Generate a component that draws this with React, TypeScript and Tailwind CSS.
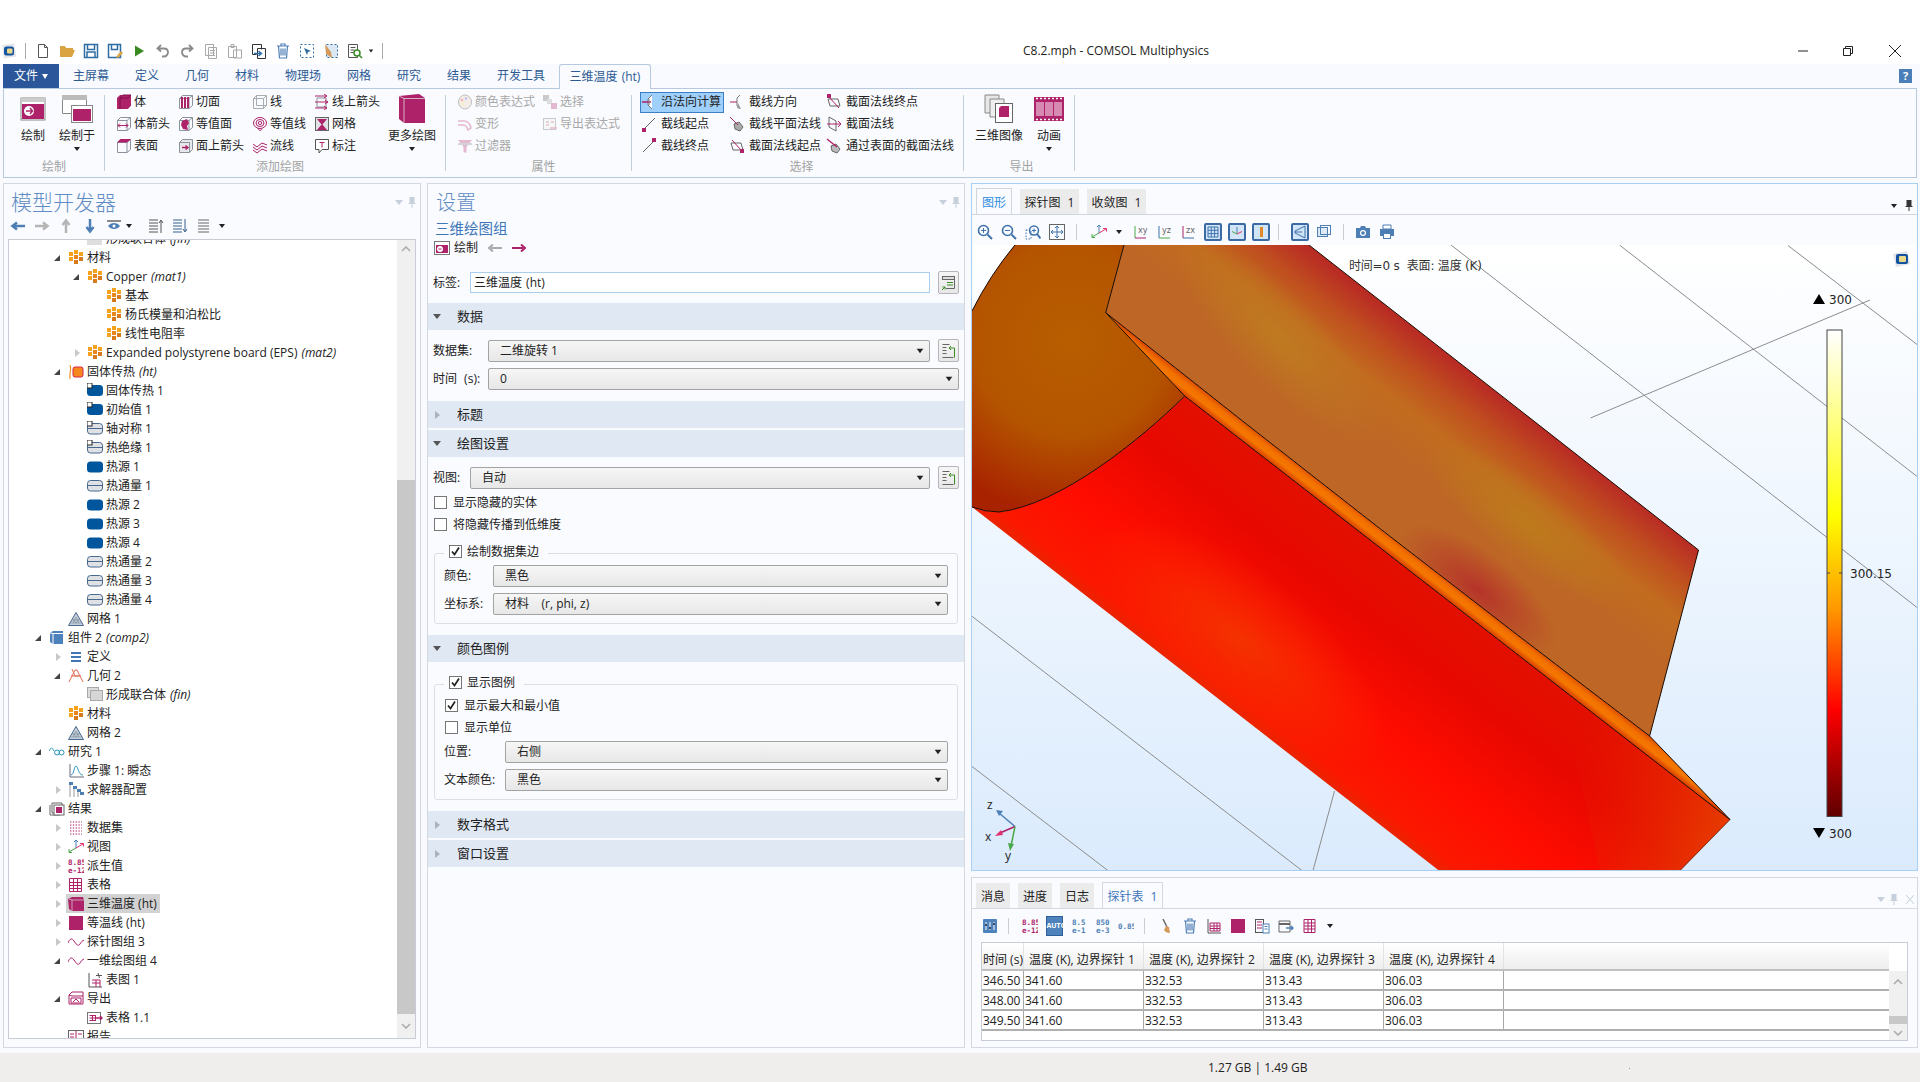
import React from 'react';

const M = '#ae2269';
const B = '#4d7fb5';
const W = '#8b929b';

type IconName = string;

const Svg = ({ w = 16, h = 16, children, className }: { w?: number; h?: number; children: React.ReactNode; className?: string }) => (
  <svg width={w} height={h} viewBox={`0 0 ${w} ${h}`} fill="none" className={`shrink-0 ${className ?? ''}`}>
    {children}
  </svg>
);

const wire = <path d="M1.5 4.5h9.5v10H1.5zM1.5 4.5l3-3h10v10l-3.5 3M11 4.5l3.5-3" stroke={W} />;

// Ribbon, tree and toolbar icons, all on a 16px box
const icons: Record<IconName, React.ReactNode> = {
  solid: (<><path d="M1 4l3-3h11v10.5L12 15H1z" fill={M} /><path d="M4 4v11M4 4l3-3h8L12 4z" stroke="#7d1049" /></>),
  arrowVol: (<>{wire}<path d="M2 9.5h10M2 9.5l2-2M2 9.5l2 2M12 9.5l-2-2M12 9.5l-2 2" stroke={M} /></>),
  surface: (<>{wire}<path d="M1 4.5l3.5-3.5H15L11 4.5z" fill={M} /></>),
  slice: (<>{wire}<path d="M4 3v11M7 3v11M10 3v11" stroke={M} strokeWidth="2" /></>),
  iso: (<>{wire}<path d="M4 5l5-2 2 4-2 3 1 4-5-1-2-4z" fill={M} /></>),
  faceArrow: (<><path d="M1.5 4.5h10v10h-10zM1.5 4.5l3-3h10v10l-3 3" fill="#e5e7ea" stroke={W} /><path d="M4 9.5h6M7.5 7.5l2.5 2-2.5 2" stroke={M} strokeWidth="1.5" /></>),
  line: (<path d="M1.5 4.5h10v10h-10zM1.5 4.5l3-3h10v10l-3 3M11.5 4.5l3-3M4.5 1.5v10h10" stroke="#a8adb4" />),
  isoLine: (<><ellipse cx="8" cy="7" rx="6.5" ry="5.5" stroke={M} /><ellipse cx="8" cy="7" rx="4" ry="3.5" stroke={M} /><ellipse cx="8" cy="7" rx="1.8" ry="1.5" stroke={M} /><path d="M6 12c1 3 3 3 4 1" stroke={M} /></>),
  stream: (<path d="M1 6l4 3 5-4 5 2M1 9l4 3 5-4 5 2M1 12l4 3 5-4 5 2" stroke={M} />),
  arrowLine: (<><path d="M3 4h9v9H3z" stroke={W} /><path d="M1 2h12M10 0l3 2-3 2M1 8h13M11 6l3 2-3 2M1 14h12M10 12l3 2-3 2" stroke={M} /></>),
  meshPlot: (<><rect x="1.5" y="1.5" width="13" height="13" fill="#dfe1e4" stroke="#666" /><path d="M3 3h10L8 9zM3 14l5-6 5 6z" fill={M} /></>),
  note: (<><path d="M1.5 1.5h13v10H8l-3 3.5v-3.5H1.5z" stroke="#555" fill="#fff" /><path d="M5.5 4.5h5M8 4.5v5" stroke={M} /></>),
  palette: (<><ellipse cx="8" cy="8" rx="6.5" ry="7" fill="#f1e3d8" stroke="#999" /><circle cx="5" cy="6" r="1.3" fill="#e88" /><circle cx="9" cy="4.5" r="1.3" fill="#8ae" /><circle cx="5.5" cy="10" r="1.3" fill="#ee8" /></>),
  select: (<><rect x="1" y="1" width="6" height="6" fill="#aaa" /><rect x="5" y="5" width="5" height="5" fill="#ccc" /><rect x="9" y="9" width="6" height="6" fill="#d98cb3" /></>),
  deform: (<path d="M1 5h6c4 0 6 3 7 7l-3 2c-1-3-2-5-5-5H1" stroke="#d98cb3" strokeWidth="1.5" />),
  exportExpr: (<><rect x="1.5" y="2.5" width="12" height="11" stroke="#aaa" fill="#f5f5f5" /><path d="M4 6h3M4 9h3M9 6h3" stroke="#c77" /><path d="M8 12h7" stroke="#d98cb3" strokeWidth="1.5" /></>),
  filter: (<><path d="M1 2h14L9.5 9v6l-3-1V9z" fill="#d98cb3" /><path d="M1 6h14" stroke="#bbb" strokeWidth="2" /></>),
  normal: (<><path d="M11 1L7 5v6l4 4" stroke="#777" fill="#fff" /><path d="M1 8h9" stroke={M} strokeWidth="1.5" /><path d="M8 5v6" stroke="#777" /></>),
  lineStart: (<><path d="M3 13L14 2" stroke="#666" /><rect x="1" y="12" width="4" height="4" fill={M} /></>),
  lineEnd: (<><path d="M2 14L13 3" stroke="#666" /><rect x="11" y="0" width="4" height="4" fill={M} /></>),
  lineDir: (<><path d="M11 1L8 4v8l3 3" stroke="#777" /><path d="M1 8h7" stroke={M} /><path d="M9 9l3 6-4-1z" fill="#999" /></>),
  planeN: (<><path d="M5 8l5-2 4 5-3 4-5-2z" fill="#aaa" stroke="#666" /><path d="M1 1l8 8" stroke={M} /></>),
  secStart: (<><path d="M2 5h10l2 7H4z" stroke="#666" /><path d="M3 2l9 10" stroke={M} /><rect x="11" y="11" width="4" height="4" fill={M} /></>),
  secEnd: (<><path d="M2 5h10l2 7H4z" stroke="#666" /><path d="M3 3l10 11" stroke={M} /><rect x="1" y="0" width="4" height="4" fill={M} /></>),
  secN: (<><path d="M3 1l7 4v10L3 11z" stroke="#666" /><path d="M1 8h14M12 5l3 3-3 3" stroke={M} /></>),
  surfSec: (<><path d="M5 8l5-2 4 5-3 4-5-2z" fill="#bbb" stroke="#666" /><path d="M1 1l10 8" stroke={M} strokeWidth="1.5" /></>),
  mat: (<><rect x="6" y="0" width="4" height="4" fill="#f5a21e" /><rect x="1" y="2" width="4" height="4" fill="#f5a21e" /><rect x="11" y="2" width="4" height="4" fill="#f5a21e" /><rect x="6" y="5" width="4" height="4" fill="#e8851e" /><rect x="1" y="7" width="4" height="4" fill="#f5a21e" /><rect x="11" y="7" width="4" height="4" fill="#d9791e" /><rect x="6" y="10" width="4" height="4" fill="#d9791e" /></>),
  domain: (<><rect x="0" y="2" width="16" height="11" rx="3.5" fill="#00569c" /><rect x="0" y="0" width="5" height="5" fill="#fff" stroke="#222" /></>),
  domainP: (<rect x="0" y="2.5" width="16" height="11" rx="3.5" fill="#00569c" />),
  bnd: (<><rect x="0.5" y="2.5" width="15" height="10.5" rx="3" fill="#dfe1e5" stroke="#47688f" /><path d="M1 7.5h14" stroke="#47688f" /><rect x="0" y="0" width="5" height="5" fill="#fff" stroke="#222" /></>),
  bndP: (<><rect x="0.5" y="2.5" width="15" height="10.5" rx="3" fill="#dfe1e5" stroke="#47688f" /><path d="M1 7.5h14" stroke="#47688f" /></>),
  physics: (<><path d="M2 1c2 4-1 8 0 14" stroke="#f0922c" strokeWidth="1.2" /><rect x="5" y="3" width="10" height="10" rx="2" fill="#f5871f" stroke="#d6244a" /></>),
  mesh: (<><path d="M8 1.5L15.5 14.5H0.5z" fill="#c8d0d8" stroke="#47688f" /><path d="M4 9h8M2.5 12h11M5 12l3-6 3 6M8 12L5.5 8.5M8 12l2.5-3.5" stroke="#6f8398" strokeWidth="0.6" /></>),
  comp: (<><path d="M1 3l3-2h10v13H4L1 12z" fill="#4d82bc" /><path d="M4 3.5V14M1 3l3 .5h10" stroke="#fff" /></>),
  defs: (<path d="M3 4h10M3 8h10M3 12h10" stroke="#3f78b5" strokeWidth="2" />),
  geom: (<path d="M1 14L7 2l2 0 6 12M4 1l3 7 4 0M3 8h10" stroke="#dd6b52" />),
  union: (<><rect x="0.5" y="0.5" width="11" height="10" fill="#dcdcdc" stroke="#a8a8a8" /><rect x="3.5" y="3.5" width="12" height="10" fill="#d6d6d6" stroke="#a8a8a8" /></>),
  study: (<><path d="M0 7c2-4 3-4 5 0" stroke="#2a93b8" /><circle cx="8" cy="8.5" r="2.5" stroke="#2a93b8" /><circle cx="12.5" cy="8.5" r="2.5" stroke="#2a93b8" /></>),
  step: (<><path d="M2 1v13h14" stroke="#667" /><path d="M3 12c3 0 3-9 5-9s2 9 7 9" stroke="#2a93b8" /></>),
  solver: (<><path d="M2 2v13M6 5v10M10 8v7" stroke="#999" /><rect x="1" y="0" width="4" height="3" fill={B} /><rect x="5" y="4" width="4" height="3" fill={B} /><rect x="9" y="7" width="4" height="3" fill={B} /><rect x="12" y="10" width="4" height="3" fill={B} /></>),
  results: (<><path d="M3 2h10v10H3zM1 4v10h10" stroke="#666" /><rect x="5" y="4" width="10" height="10" fill="#fff" stroke="#666" /><rect x="7" y="6" width="6" height="6" fill={M} /></>),
  data: (<path d="M2 2h12M2 5h12M2 8h12M2 11h12M2 14h12" stroke={M} strokeDasharray="1.4 1.4" />),
  views: (<><path d="M8 9V1M6 3l2-2 2 2" stroke={B} /><path d="M8 9L1 13M1 10v3.5h3" stroke="#4aa84a" /><path d="M8 9l7-4M12 4.5h3.5v3" stroke="#e0336e" /></>),
  derived: (<><text x="0" y="7" fontSize="7.5" fontWeight="700" fontFamily="DejaVu Sans Mono" fill={M}>8.85</text><text x="0" y="14.5" fontSize="7.5" fontWeight="700" fontFamily="DejaVu Sans Mono" fill={M}>e-12</text></>),
  table: (<path d="M1.5 1.5h12v13h-12zM1.5 5.5h12M1.5 8.5h12M1.5 11.5h12M5.5 1.5v13M9.5 1.5v13" stroke={M} />),
  plot3d: (<><path d="M0 3l4-2h11l1 3v11H4L1 13z" fill={M} /><path d="M4 4v11M1 3l3 1h12" stroke="#d7d7d7" strokeWidth="0.7" /></>),
  square: (<rect x="1" y="1" width="14" height="14" fill={M} />),
  wave: (<path d="M0 9c2-5 4-5 6-2s4 6 6 3 2-3 4-4" stroke={M} />),
  chart: (<><path d="M2 1v14h13" stroke="#555" /><path d="M5 8h8v7M5 11h8M9 8v7" stroke={M} /><path d="M11 1l1.5 5M9 3.5h6" stroke="#555" /></>),
  exportN: (<><path d="M1 4l3-3h11v4H4zM1 4v9h14V5" stroke={M} /><path d="M3 7h10v5H3z" stroke={M} /><path d="M5 11l3-3 3 3" stroke={M} /></>),
  tableExp: (<><rect x="0.5" y="2.5" width="13" height="11" fill="#fff" stroke="#777" /><path d="M2.5 5.5h6M2.5 8h6M2.5 10.5h6M5.5 5v6M8.5 5v6" stroke={M} /><path d="M9 8h6M13 6l2 2-2 2" stroke={M} strokeWidth="1.5" /></>),
  drawSmall: (<><rect x="0.5" y="1.5" width="15" height="13" fill="#fff" stroke="#777" /><rect x="2" y="5" width="12" height="8" fill={M} /><circle cx="6" cy="9" r="3" fill="#fff" /><path d="M4.5 9h3" stroke={M} /></>),
  report: (<><rect x="0.5" y="1.5" width="15" height="13" stroke="#666" /><path d="M8 2v12M2 5h4M10 5h4M2 8h4" stroke={M} /></>),
  blank: (<rect x="0" y="2" width="15" height="12" fill="#dedede" />),
  back: (<path d="M15 8H4M7 4.5L2.5 8 7 11.5" stroke={B} strokeWidth="2.5" />),
  forward: (<path d="M1 8h11M9 4.5L13.5 8 9 11.5" stroke="#b5b5b5" strokeWidth="2.5" />),
  up: (<path d="M8 15V4M4.5 7L8 2.5 11.5 7" stroke="#b5b5b5" strokeWidth="2.5" />),
  down: (<path d="M8 1v11M4.5 9L8 13.5 11.5 9" stroke={B} strokeWidth="2.5" />),
  eye: (<><path d="M1 3h14" stroke="#666" strokeWidth="1.5" /><path d="M2 8c3-4 9-4 12 0-3 4-9 4-12 0z" fill={B} /><circle cx="8" cy="8" r="1.5" fill="#fff" /></>),
  listUp: (<path d="M1 2h9M1 5h9M1 8h9M1 11h9M1 14h9M13 15V3M11 5l2-3 2 3" stroke="#555" />),
  listDown: (<path d="M1 2h9M1 5h9M1 8h9M1 11h9M1 14h9M13 1v12M11 11l2 3 2-3" stroke="#34608f" />),
  list: (<path d="M2 2h11M2 5h11M2 8h11M2 11h11M2 14h11" stroke="#666" />),
  zoomIn: (<><circle cx="6.5" cy="6.5" r="5" stroke="#3f72ab" strokeWidth="1.6" /><path d="M10.5 10.5L15 15" stroke="#3f72ab" strokeWidth="2" /><path d="M4 6.5h5M6.5 4v5" stroke="#3f72ab" /></>),
  zoomOut: (<><circle cx="6.5" cy="6.5" r="5" stroke="#3f72ab" strokeWidth="1.6" /><path d="M10.5 10.5L15 15" stroke="#3f72ab" strokeWidth="2" /><path d="M4 6.5h5" stroke="#3f72ab" /></>),
  zoomBox: (<><path d="M1 6h5v9H1z" stroke="#3f72ab" strokeDasharray="1.5 1.5" /><circle cx="9" cy="6.5" r="4.5" stroke="#3f72ab" strokeWidth="1.5" /><path d="M12 10l3.5 4.5" stroke="#3f72ab" strokeWidth="2" /><path d="M7 6.5h4M9 4.5v4" stroke="#3f72ab" /></>),
  zoomFit: (<><rect x="0.5" y="0.5" width="15" height="15" stroke="#666" /><path d="M8 2v12M2 8h12" stroke="#3f72ab" /><path d="M6 4l2-2 2 2M6 12l2 2 2-2M4 6L2 8l2 2M12 6l2 2-2 2" stroke="#3f72ab" /></>),
  xy: (<><path d="M2 2v12" stroke="#4aa84a" /><path d="M2 14h11" stroke={M} /><text x="5" y="9" fontSize="8" fontFamily="DejaVu Sans" fill="#666">xy</text></>),
  yz: (<><path d="M2 2v12" stroke="#3f72ab" /><path d="M2 14h11" stroke="#4aa84a" /><text x="5" y="9" fontSize="8" fontFamily="DejaVu Sans" fill="#666">yz</text></>),
  zx: (<><path d="M2 2v12" stroke={M} /><path d="M2 14h11" stroke="#3f72ab" /><text x="5" y="9" fontSize="8" fontFamily="DejaVu Sans" fill="#666">zx</text></>),
  gridBtn: (<path d="M3 3h10v10H3zM3 6.3h10M3 9.6h10M6.3 3v10M9.6 3v10" stroke="#3f72ab" />),
  axesBtn: (<><path d="M8 10V3" stroke={B} /><path d="M8 10L3 7.5" stroke="#4aa84a" /><path d="M8 10l5-2.5" stroke="#e0336e" /></>),
  legendBtn: (<rect x="7" y="3" width="3" height="10" fill="#e08a2c" />),
  persp: (<><path d="M13 2L3 7v2l10 5z" fill="#cfe3f7" stroke="#3f72ab" /><path d="M3 8h7" stroke="#3f72ab" /></>),
  layers: (<><rect x="1.5" y="3.5" width="10" height="9" fill="#dfe9f4" stroke={B} /><rect x="4.5" y="1.5" width="10" height="9" stroke={B} /></>),
  camera: (<><path d="M1 4h4l1-2h4l1 2h4v10H1z" fill={B} /><circle cx="8" cy="9" r="3" fill="#fff" /><circle cx="8" cy="9" r="1.8" fill={B} /></>),
  printer: (<><path d="M4 1h8v4H4z" fill="#fff" stroke={B} /><path d="M1 5h14v7h-3v3H4v-3H1z" fill={B} /><path d="M5 10h6v4H5z" fill="#fff" /></>),
  broom: (<><path d="M5 1l4 8" stroke="#6d6d6d" strokeWidth="1.5" /><path d="M8 8l3 1 1 6c-3 0-5-1-6-3z" fill="#d59a5b" /></>),
  trash: (<path d="M2 3h12M6 3V1h4v2M3.5 3l1 12h7l1-12M6 5.5v7M8 5.5v7M10 5.5v7" stroke={B} strokeWidth="1.2" />),
  tableAxis: (<><path d="M2 1v14h13" stroke="#555" /><path d="M4 5h10v8H4zM4 8h10M4 10.5h10M8 5v8M11 5v8" stroke={M} /></>),
  bars: (<><rect x="1" y="1" width="14" height="14" rx="1" fill="#4d82bc" /><path d="M4 4v8M8 4v8M12 4v8" stroke="#fff" /><path d="M3 7h2M7 10h2M11 6h2" stroke="#223" strokeWidth="1.5" /></>),
  num1: (<><text x="0" y="7" fontSize="7.5" fontWeight="700" fontFamily="DejaVu Sans Mono" fill={M}>8.85</text><text x="0" y="14.5" fontSize="7.5" fontWeight="700" fontFamily="DejaVu Sans Mono" fill={M}>e-12</text></>),
  num2: (<><text x="2" y="7" fontSize="7.5" fontWeight="700" fontFamily="DejaVu Sans Mono" fill={B}>8.5</text><text x="2" y="14.5" fontSize="7.5" fontWeight="700" fontFamily="DejaVu Sans Mono" fill={B}>e-1</text></>),
  num3: (<><text x="2" y="7" fontSize="7.5" fontWeight="700" fontFamily="DejaVu Sans Mono" fill={B}>850</text><text x="2" y="14.5" fontSize="7.5" fontWeight="700" fontFamily="DejaVu Sans Mono" fill={B}>e-3</text></>),
  num4: (<text x="0" y="11" fontSize="7.5" fontWeight="700" fontFamily="DejaVu Sans Mono" fill={B}>0.85</text>),
  copyT: (<><rect x="1.5" y="1.5" width="8" height="13" stroke="#555" /><path d="M3 4h5M3 7h5M3 10h5" stroke={M} /><rect x="9" y="6" width="6" height="9" fill="#fff" stroke={B} /><path d="M10.5 8.5h3M10.5 11h3" stroke={B} /></>),
  expT: (<><path d="M1 3h11v11H1z" stroke="#666" /><path d="M1 6h11" stroke="#666" strokeWidth="2" /><path d="M8 10h7M13 8l2 2-2 2" stroke={B} strokeWidth="1.5" /></>),
  grid: (<path d="M2 1.5h11v13H2zM2 5h11M2 8h11M2 11h11M6 1.5v13M9.5 1.5v13" stroke={M} />),
  file: (<path d="M3.5 1.5h6l3 3v10h-9zM9.5 1.5v3h3" fill="#fff" stroke="#555" />),
  open: (<path d="M1 3h5l1 2h7v2H4l-3 7zM1 14l3-7h12l-3 7z" fill="#d9a441" />),
  save: (<path d="M1.5 1.5h13v13h-13zM4.5 1.5v5h7v-5M4 14v-5h8v5" stroke="#2e6da4" strokeWidth="1.5" />),
  saveAs: (<><path d="M1.5 1.5h12v13h-12zM4.5 1.5v5h6v-5" stroke="#2e6da4" strokeWidth="1.5" /><path d="M9 14l5-6 2 2-5 5z" fill="#d9a441" /></>),
  play: (<path d="M4 2.5l9 5.5-9 5.5z" fill="#3a8a22" />),
  undo: (<path d="M6 2L2.5 5.5 6 8.5M3 5.500h6c3 0 4 2 4 4s-2 4-4 4H7" stroke="#8a8a8a" strokeWidth="1.8" />),
  redo: (<path d="M10 2l3.500 3.500L10 8.500M13 5.500H7c-3 0-4 2-4 4s2 4 4 4h2" stroke="#8a8a8a" strokeWidth="1.8" />),
  copy: (<path d="M2.500 1.500h8v11h-8zM5.500 4.500h8v11h-8zM7 7.500h5M7 10h5M7 12.500h5" stroke="#a8a8a8" fill="#fff" />),
  paste: (<path d="M1.500 3.500h8v11h-8zM4 1.500h3v3H4zM6.500 7h8v8h-8z" stroke="#a8a8a8" fill="#fff" />),
  dup: (<><path d="M1.500 1.500h9v5M1.500 1.500v10h4M6.500 5.500h8v10h-8z" stroke="#333" /><path d="M3 10.500h7M7.500 8l3 2.500-3 2.500" stroke="#2e6da4" strokeWidth="1.5" /></>),
  dash: (<><rect x="1.500" y="1.500" width="13" height="13" stroke="#2e6da4" strokeDasharray="2 2" /><path d="M5 5l7 3-3 1-1 3z" fill="#2e6da4" /></>),
  dashBroom: (<><rect x="3.500" y="1.500" width="11" height="13" stroke="#2e6da4" strokeDasharray="2 2" fill="#dbe7f3" /><path d="M2 1l6 8 1 6-6-4z" fill="#d59a5b" /></>),
  find: (<><path d="M1.500 1.500h9v13h-9zM3.500 4.500h5M3.500 7h4M3.500 9.500h3" stroke="#555" /><circle cx="10" cy="10" r="3" fill="#fff" stroke="#3a8a22" strokeWidth="1.5" /><path d="M12 12l3 3" stroke="#3a8a22" strokeWidth="1.5" /></>),
  logo: (<><path d="M1 2l12-1.500 2.500 13L3 15.500z" fill="#e2e5ea" /><rect x="3" y="3.500" width="10" height="9" rx="2.500" fill="#14539f" /><rect x="6" y="5.500" width="5.500" height="5" rx="1" fill="#e9d98a" /></>),
  refresh: (<><rect x="1.500" y="1.500" width="12" height="3" fill="#ddd" stroke="#666" /><path d="M1.500 4.500h12v9H5" stroke="#666" /><path d="M6 7.500h6M6 10h6" stroke="#3a8a22" /><path d="M1 15l3-3M1.500 12H4v2.500" stroke="#3a8a22" /></>),
  listLoad: (<><path d="M1.500 1.500h7M1.500 4.500h4M1.500 7.500h4M1.500 10.500h4M1.500 14.500h11" stroke="#666" /><path d="M13.500 14.500V5H8M10 3L8 5l2 2" stroke="#3a8a22" /></>),
};

const Icon = ({ name, className }: { name: IconName; className?: string }) => <Svg className={className}>{icons[name]}</Svg>;

const Caret = ({ className }: { className?: string }) => (
  <span className={`inline-block shrink-0 w-0 h-0 border-l-[3.5px] border-r-[3.5px] border-t-[4px] border-l-transparent border-r-transparent border-t-[#222] ${className ?? ''}`} />
);

/* ---------- title bar ---------- */
const QAT = ['file', 'open', 'save', 'saveAs', 'play', 'undo', 'redo', 'copy', 'paste', 'dup', 'trash', 'dash', 'dashBroom', 'find'];

const TitleBar = () => (
  <div className="flex h-[64px] items-center pt-[38px] bg-white shrink-0">
    <div className="flex items-center w-[1023px] pl-[1px]">
      <Icon name="logo" />
      <div className="w-px h-[16px] bg-[#aaa] ml-[8px] mr-[5px]" />
      {QAT.map((q, i) => (
        <div key={i} className="w-[24px] flex justify-center"><Icon name={q} /></div>
      ))}
      <Caret className="ml-[1px] scale-75" />
      <div className="w-px h-[16px] bg-[#aaa] ml-[8px]" />
    </div>
    <div className="text-[12px] text-[#222] leading-none">C8.2.mph - COMSOL Multiphysics</div>
    <div className="ml-auto flex items-center">
      <svg width="12" height="12" viewBox="0 0 12 12" className="mr-[33px]"><path d="M1 6h10" stroke="#222" /></svg>
      <svg width="12" height="12" viewBox="0 0 12 12" className="mr-[34px]"><path d="M1.500 3.500h7v7h-7zM3.500 3.500v-2h7v7h-2" stroke="#222" fill="none" /></svg>
      <svg width="14" height="14" viewBox="0 0 14 14" className="mr-[18px]"><path d="M1 1l12 12M13 1L1 13" stroke="#222" /></svg>
    </div>
  </div>
);

/* ---------- ribbon ---------- */
const TABS = [
  ['主屏幕', 'w-[64px]'], ['定义', 'w-[48px]'], ['几何', 'w-[52px]'], ['材料', 'w-[48px]'], ['物理场', 'w-[64px]'],
  ['网格', 'w-[48px]'], ['研究', 'w-[52px]'], ['结果', 'w-[48px]'], ['开发工具', 'w-[76px]'],
];

const TabStrip = () => (
  <div className="flex h-[24px] bg-[#f8faff] shrink-0 relative">
    <div className="ml-[3px] w-[56px] bg-[#2b579a] text-white text-[12px] flex items-center justify-center gap-[4px]">
      文件 <span className="w-0 h-0 border-l-[3.5px] border-r-[3.5px] border-t-[5px] border-l-transparent border-r-transparent border-t-white" />
    </div>
    {TABS.map(([t, w]) => (
      <div key={t} className={`${w} flex items-center justify-center text-[12px] text-[#2d5a93]`}>{t}</div>
    ))}
    <div className="w-[92px] h-[25px] bg-[#f9fbff] border border-b-0 border-[#b7c9de] rounded-t-[3px] flex items-center justify-center text-[12px] text-[#2d5a93] z-10 [word-spacing:1px]">
      三维温度 (ht)
    </div>
    <div className="ml-auto mr-[8px] mt-[5px] w-[13px] h-[14px] bg-[#4a7eb8] text-white text-[11px] font-bold leading-[14px] text-center">?</div>
  </div>
);

const RItem = ({ icon, text, off, wide, sel }: { icon: string; text: string; off?: boolean; wide?: boolean; sel?: boolean }) => (
  <div className={`flex items-center h-[22px] shrink-0 text-[12px] whitespace-nowrap ${off ? 'text-[#a8a8a8]' : 'text-[#222]'}`}>
    <div className={`flex items-center border h-[21px] pr-[2px] ${sel ? 'bg-[#9fcffb] border-[#3c7fc4]' : 'border-transparent'}`}>
      <div className={`${wide ? 'w-[20px]' : 'w-[18px]'} flex ${off ? 'opacity-60' : ''}`}><Icon name={icon} /></div>
      {text}
    </div>
  </div>
);

const RLarge = ({ children, text, caret, w }: { children: React.ReactNode; text: string; caret?: boolean; w: string }) => (
  <div className={`${w} flex flex-col items-center shrink-0 text-[12px] text-[#222] whitespace-nowrap`}>
    <div className="h-[36px] flex items-center">{children}</div>
    <div className="h-[18px] leading-[18px]">{text}</div>
    {caret && <Caret className="mt-[2px]" />}
  </div>
);

const RGroup = ({ label, children, className }: { label: string; children: React.ReactNode; className: string }) => (
  <div className={`${className} mt-[2px] flex flex-col shrink-0`}>
    <div className="h-[66px] flex">{children}</div>
    <div className="h-[20px] text-center text-[12px] leading-[20px] text-[#a3a3a3]">{label}</div>
  </div>
);

const RDiv = () => <div className="w-px my-[6px] bg-[#c3cfdc] shrink-0" />;

const Col = ({ w, children }: { w: string; children: React.ReactNode }) => <div className={`${w} shrink-0 flex flex-col`}>{children}</div>;

const Ribbon = () => (
  <div className="mx-[3px] w-[1914px] h-[90px] bg-[#f9fbff] border border-[#b7c9de] flex shrink-0">
    <RGroup label="绘制" className="w-[100px]">
      <RLarge text="绘制" w="w-[58px]">
        <svg width="26" height="26" viewBox="0 0 26 26"><rect x="1" y="2" width="24" height="22" fill="#fff" stroke="#888" /><path d="M1 2h24v4H1z" fill="#ccc" /><rect x="2" y="8" width="22" height="15" fill={M} /><circle cx="9" cy="15" r="5" fill="#fff" /><path d="M6 15h6M10 12l2.500 3-2.500 3" stroke={M} strokeWidth="1.5" fill="none" /></svg>
      </RLarge>
      <RLarge text="绘制于" caret w="w-[30px]">
        <svg width="32" height="30" viewBox="0 0 32 30" className="shrink-0"><path d="M1.500 1.500h24v18h-24z" fill="#fff" stroke="#888" /><rect x="1" y="1" width="25" height="5" fill="#bbb" /><rect x="10.500" y="11.500" width="21" height="17" fill="#fff" stroke="#888" /><rect x="12" y="15" width="18" height="12" fill={M} /></svg>
      </RLarge>
    </RGroup>
    <RDiv />
    <RGroup label="添加绘图" className="w-[340px] pl-[10px]">
      <Col w="w-[62px]"><RItem icon="solid" text="体" /><RItem icon="arrowVol" text="体箭头" /><RItem icon="surface" text="表面" /></Col>
      <Col w="w-[74px]"><RItem icon="slice" text="切面" /><RItem icon="iso" text="等值面" /><RItem icon="faceArrow" text="面上箭头" /></Col>
      <Col w="w-[62px]"><RItem icon="line" text="线" /><RItem icon="isoLine" text="等值线" /><RItem icon="stream" text="流线" /></Col>
      <Col w="w-[68px]"><RItem icon="arrowLine" text="线上箭头" /><RItem icon="meshPlot" text="网格" /><RItem icon="note" text="标注" /></Col>
      <RLarge text="更多绘图" caret w="w-[62px]">
        <svg width="28" height="32" viewBox="0 0 28 32"><path d="M1 3l20-2 6 4v25H6l-5-4z" fill={M} /><path d="M6 5.500V30M1 3l5 2.500h21" stroke="#d9d9d9" strokeWidth="0.8" fill="none" /></svg>
      </RLarge>
    </RGroup>
    <RDiv />
    <RGroup label="属性" className="w-[185px] pl-[10px]">
      <Col w="w-[85px]"><RItem off icon="palette" text="颜色表达式" /><RItem off icon="deform" text="变形" /><RItem off icon="filter" text="过滤器" /></Col>
      <Col w="w-[85px]"><RItem off icon="select" text="选择" /><RItem off icon="exportExpr" text="导出表达式" /></Col>
    </RGroup>
    <RDiv />
    <RGroup label="选择" className="w-[331px] pl-[8px]">
      <Col w="w-[88px]"><RItem sel wide icon="normal" text="沿法向计算" /><RItem wide icon="lineStart" text="截线起点" /><RItem wide icon="lineEnd" text="截线终点" /></Col>
      <Col w="w-[97px]"><RItem wide icon="lineDir" text="截线方向" /><RItem wide icon="planeN" text="截线平面法线" /><RItem wide icon="secStart" text="截面法线起点" /></Col>
      <Col w="w-[130px]"><RItem wide icon="secEnd" text="截面法线终点" /><RItem wide icon="secN" text="截面法线" /><RItem wide icon="surfSec" text="通过表面的截面法线" /></Col>
    </RGroup>
    <RDiv />
    <RGroup label="导出" className="w-[110px] pl-[5px]">
      <RLarge text="三维图像" w="w-[60px]">
        <svg width="30" height="30" viewBox="0 0 30 30"><path d="M1 1h14v18H1z" fill="#e7e7e7" stroke="#888" /><path d="M6 5h14v18H6z" fill="#eee" stroke="#888" /><rect x="11.500" y="9.500" width="17" height="19" fill="#fff" stroke="#666" /><path d="M15 14l2-2h8v11h-10z" fill={M} /></svg>
      </RLarge>
      <RLarge text="动画" caret w="w-[40px]">
        <svg width="30" height="24" viewBox="0 0 30 24"><rect x="0" y="0" width="30" height="24" fill={M} /><path d="M2 1.500h26M2 22.500h26" stroke="#fff" strokeWidth="1.5" strokeDasharray="2 2" /><rect x="2" y="5" width="8" height="14" fill="#d68ab1" /><rect x="11" y="5" width="8" height="14" fill="#d68ab1" /><rect x="20" y="5" width="8" height="14" fill="#d68ab1" /></svg>
      </RLarge>
    </RGroup>
    <RDiv />
  </div>
);

/* ---------- model builder tree ---------- */
type Node = { d: number; i: string; t: string; it?: string; e?: 'o' | 'c'; sel?: boolean };

const TREE: Node[] = [
  { d: 3, i: 'blank', t: '形成联合体', it: '(fin)' },
  { d: 2, i: 'mat', t: '材料', e: 'o' },
  { d: 3, i: 'mat', t: 'Copper', it: '(mat1)', e: 'o' },
  { d: 4, i: 'mat', t: '基本' },
  { d: 4, i: 'mat', t: '杨氏模量和泊松比' },
  { d: 4, i: 'mat', t: '线性电阻率' },
  { d: 3, i: 'mat', t: 'Expanded polystyrene board (EPS)', it: '(mat2)', e: 'c' },
  { d: 2, i: 'physics', t: '固体传热', it: '(ht)', e: 'o' },
  { d: 3, i: 'domain', t: '固体传热 1' },
  { d: 3, i: 'domain', t: '初始值 1' },
  { d: 3, i: 'bnd', t: '轴对称 1' },
  { d: 3, i: 'bnd', t: '热绝缘 1' },
  { d: 3, i: 'domainP', t: '热源 1' },
  { d: 3, i: 'bndP', t: '热通量 1' },
  { d: 3, i: 'domainP', t: '热源 2' },
  { d: 3, i: 'domainP', t: '热源 3' },
  { d: 3, i: 'domainP', t: '热源 4' },
  { d: 3, i: 'bndP', t: '热通量 2' },
  { d: 3, i: 'bndP', t: '热通量 3' },
  { d: 3, i: 'bndP', t: '热通量 4' },
  { d: 2, i: 'mesh', t: '网格 1' },
  { d: 1, i: 'comp', t: '组件 2', it: '(comp2)', e: 'o' },
  { d: 2, i: 'defs', t: '定义', e: 'c' },
  { d: 2, i: 'geom', t: '几何 2', e: 'o' },
  { d: 3, i: 'union', t: '形成联合体', it: '(fin)' },
  { d: 2, i: 'mat', t: '材料' },
  { d: 2, i: 'mesh', t: '网格 2' },
  { d: 1, i: 'study', t: '研究 1', e: 'o' },
  { d: 2, i: 'step', t: '步骤 1: 瞬态' },
  { d: 2, i: 'solver', t: '求解器配置', e: 'c' },
  { d: 1, i: 'results', t: '结果', e: 'o' },
  { d: 2, i: 'data', t: '数据集', e: 'c' },
  { d: 2, i: 'views', t: '视图', e: 'c' },
  { d: 2, i: 'derived', t: '派生值', e: 'c' },
  { d: 2, i: 'table', t: '表格', e: 'c' },
  { d: 2, i: 'plot3d', t: '三维温度 (ht)', e: 'c', sel: true },
  { d: 2, i: 'square', t: '等温线 (ht)', e: 'c' },
  { d: 2, i: 'wave', t: '探针图组 3', e: 'c' },
  { d: 2, i: 'wave', t: '一维绘图组 4', e: 'o' },
  { d: 3, i: 'chart', t: '表图 1' },
  { d: 2, i: 'exportN', t: '导出', e: 'o' },
  { d: 3, i: 'tableExp', t: '表格 1.1' },
  { d: 2, i: 'report', t: '报告' },
];

const Expander = ({ e }: { e?: 'o' | 'c' }) => {
  if (e === 'o') return <span className="w-0 h-0 border-l-[6px] border-b-[6px] border-l-transparent border-b-[#444]" />;
  if (e === 'c') return <span className="ml-[2px] w-0 h-0 border-l-[5px] border-y-[4.5px] border-y-transparent border-l-[#c8c8c8]" />;
  return null;
};

const TreeRow = ({ n }: { n: Node }) => (
  <div className="flex items-center h-[19px] text-[12px] text-[#222] whitespace-nowrap" style={{ paddingLeft: 26 + 19 * (n.d - 1) }}>
    <div className="w-[12px] flex items-center shrink-0"><Expander e={n.e} /></div>
    <div className={`flex items-center h-[19px] pl-[2px] pr-[3px] ${n.sel ? 'bg-[#d2d2d2]' : ''}`}>
      <div className="w-[19px] shrink-0 flex items-center"><Icon name={n.i} /></div>
      <span>{n.t}</span>
      {n.it && <span className="italic ml-[4px]">{n.it}</span>}
    </div>
  </div>
);

const PanelPins = ({ x }: { x?: boolean }) => (
  <div className="flex items-center gap-[5px]">
    <span className="w-0 h-0 border-l-[4px] border-r-[4px] border-t-[5px] border-l-transparent border-r-transparent border-t-[#c5d0dc]" />
    <svg width="8" height="11" viewBox="0 0 8 11"><path d="M1.500 0h5v6h1v1h-3v4h-1V7H.5V6h1z" fill="#c5d0dc" /></svg>
    {x && <svg width="8" height="9" viewBox="0 0 8 9" className="ml-[3px]"><path d="M0 0l8 9M8 0L0 9" stroke="#c5d0dc" /></svg>}
  </div>
);

const ModelBuilder = () => (
  <div className="w-[418px] h-full shrink-0 bg-[#fafbff] border border-[#d3d8e3] flex flex-col">
    <div className="h-[34px] flex items-center pt-[2px] pl-[7px] pr-[4px] justify-between">
      <span className="text-[21px] leading-none text-[#5f8cc4] font-light">模型开发器</span>
      <PanelPins />
    </div>
    <div className="h-[16px] flex items-center pl-[6px] mb-[5px]">
      <div className="w-[24px]"><Icon name="back" /></div>
      <div className="w-[24px]"><Icon name="forward" /></div>
      <div className="w-[24px]"><Icon name="up" /></div>
      <div className="w-[24px]"><Icon name="down" /></div>
      <Icon name="eye" />
      <Caret className="ml-[4px] mr-[16px]" />
      <div className="w-[24px]"><Icon name="listUp" /></div>
      <div className="w-[24px]"><Icon name="listDown" /></div>
      <Icon name="list" />
      <Caret className="ml-[7px]" />
    </div>
    <div className="mx-[4px] h-[800px] bg-white border border-[#c8ccd4] flex overflow-hidden">
      <div className="flex-1 overflow-hidden">
        <div className="-mt-[11px]">
          {TREE.map((n, i) => <TreeRow key={i} n={n} />)}
        </div>
      </div>
      <div className="w-[18px] bg-[#f0f0f0] flex flex-col shrink-0">
        <div className="h-[240px] flex justify-center pt-[6px]">
          <svg width="10" height="6" viewBox="0 0 10 6"><path d="M1 5l4-4 4 4" stroke="#aaa" fill="none" strokeWidth="1.5" /></svg>
        </div>
        <div className="flex-1 bg-[#c8c8c8]" />
        <div className="h-[24px] flex justify-center items-center">
          <svg width="10" height="6" viewBox="0 0 10 6"><path d="M1 1l4 4 4-4" stroke="#aaa" fill="none" strokeWidth="1.5" /></svg>
        </div>
      </div>
    </div>
  </div>
);

/* ---------- settings ---------- */
const Select = ({ text, className }: { text: string; className?: string }) => (
  <div className={`h-[22px] flex items-center pl-[11px] pr-[6px] border border-[#a3a3a3] rounded-[2px] bg-linear-to-b from-[#f6f6f6] to-[#e7e7e7] text-[12px] text-[#222] whitespace-pre ${className ?? 'flex-1'}`}>
    <span className="flex-1">{text}</span>
    <Caret className="scale-110" />
  </div>
);

const SideBtn = ({ icon }: { icon: string }) => (
  <div className="ml-[8px] w-[21px] h-[23px] flex items-center justify-center border border-[#b5b5b5] rounded-[2px] bg-linear-to-b from-[#f6f6f6] to-[#e7e7e7] shrink-0"><Icon name={icon} /></div>
);

const Section = ({ text, open, className }: { text: string; open?: boolean; className: string }) => (
  <div className={`h-[27px] bg-[#dfe8f3] flex items-center text-[13px] text-[#222] ${className}`}>
    <div className="w-[29px] pl-[5px] flex items-center">
      {open
        ? <span className="w-0 h-0 border-l-[4.5px] border-r-[4.5px] border-t-[5px] border-l-transparent border-r-transparent border-t-[#555]" />
        : <span className="ml-[2px] w-0 h-0 border-l-[5px] border-y-[4.5px] border-y-transparent border-l-[#aab2bb]" />}
    </div>
    {text}
  </div>
);

const Check = ({ on }: { on?: boolean }) => (
  <div className="w-[13px] h-[13px] border border-[#767676] bg-white shrink-0 flex items-center justify-center">
    {on && <svg width="11" height="11" viewBox="0 0 11 11"><path d="M2 5.500l2.500 3L9 1.500" stroke="#222" strokeWidth="1.7" fill="none" /></svg>}
  </div>
);

const CheckRow = ({ on, text, className }: { on?: boolean; text: string; className: string }) => (
  <div className={`h-[21px] flex items-center gap-[6px] text-[12px] text-[#222] ${className}`}>
    <Check on={on} />{text}
  </div>
);

const Field = ({ label, w, children, className }: { label: string; w: string; children: React.ReactNode; className?: string }) => (
  <div className={`flex items-center text-[12px] text-[#222] ${className ?? ''}`}>
    <div className={`${w} shrink-0 whitespace-nowrap [word-spacing:4px]`}>{label}</div>
    {children}
  </div>
);

const Legend = ({ text, on }: { text: string; on?: boolean }) => (
  <div className="absolute -top-[13px] left-[9px] bg-[#fafbff] pl-[5px] pr-[9px] h-[21px] flex items-center gap-[5px] text-[12px] text-[#222]">
    <Check on={on} />{text}
  </div>
);

const Settings = () => (
  <div className="w-[538px] h-full shrink-0 bg-[#fafbff] border border-[#d3d8e3] flex flex-col">
    <div className="h-[34px] flex items-center pt-[3px] pl-[8px] pr-[4px] justify-between">
      <span className="text-[20px] leading-none text-[#5f8cc4] font-light">设置</span>
      <PanelPins />
    </div>
    <div className="h-[20px] pl-[7px] pt-[2px] flex items-center text-[14.5px] text-[#4075b8]">三维绘图组</div>
    <div className="h-[20px] pl-[6px] flex items-center text-[12px] text-[#222]">
      <Icon name="drawSmall" className="mr-[4px]" />绘制
      <svg width="14" height="8" viewBox="0 0 14 8" className="ml-[10px]"><path d="M14 4H3M5 .5L1 4l4 3.500" stroke="#aaa" strokeWidth="2" fill="none" /></svg>
      <svg width="14" height="8" viewBox="0 0 14 8" className="ml-[10px]"><path d="M0 4h11M9 .5L13 4 9 7.500" stroke={M} strokeWidth="2" fill="none" /></svg>
    </div>
    <div className="mt-[13px] h-[23px] flex items-center pl-[5px] pr-[5px] text-[12px] text-[#222]">
      <div className="w-[37px] shrink-0">标签:</div>
      <div className="flex-1 h-[21px] bg-white border border-[#a9cdeb] pl-[3px] flex items-center [word-spacing:1px]">三维温度 (ht)</div>
      <SideBtn icon="refresh" />
    </div>
    <Section text="数据" open className="mt-[9px]" />
    <Field label="数据集:" w="w-[55px]" className="mt-[9px] h-[23px] pl-[5px] pr-[5px]">
      <Select text="二维旋转 1" /><SideBtn icon="listLoad" />
    </Field>
    <Field label="时间 (s):" w="w-[55px]" className="mt-[6px] h-[22px] pl-[5px] pr-[5px]">
      <Select text="0" />
    </Field>
    <Section text="标题" className="mt-[11px]" />
    <Section text="绘图设置" open className="mt-[2px]" />
    <Field label="视图:" w="w-[37px]" className="mt-[9px] h-[23px] pl-[5px] pr-[5px]">
      <Select text="自动" /><SideBtn icon="listLoad" />
    </Field>
    <CheckRow text="显示隐藏的实体" className="mt-[3px] pl-[6px]" />
    <CheckRow text="将隐藏传播到低维度" className="mt-[1px] pl-[6px]" />
    <div className="relative mt-[18px] mx-[6px] border border-[#d9dfe6] rounded-[3px] pt-[11px] pb-[8px] pl-[9px] pr-[9px]">
      <Legend text="绘制数据集边" on />
      <Field label="颜色:" w="w-[49px]" className="h-[22px]"><Select text="黑色" /></Field>
      <Field label="坐标系:" w="w-[49px]" className="mt-[6px] h-[22px]"><Select text="材料    (r, phi, z)" /></Field>
    </div>
    <Section text="颜色图例" open className="mt-[11px]" />
    <div className="relative mt-[22px] mx-[6px] border border-[#d9dfe6] rounded-[3px] pt-[10px] pb-[8px] pl-[9px] pr-[9px]">
      <Legend text="显示图例" on />
      <CheckRow on text="显示最大和最小值" className="pl-[1px]" />
      <CheckRow text="显示单位" className="mt-[1px] pl-[1px]" />
      <Field label="位置:" w="w-[61px]" className="mt-[3px] h-[22px]"><Select text="右侧" /></Field>
      <Field label="文本颜色:" w="w-[61px]" className="mt-[6px] h-[22px]"><Select text="黑色" /></Field>
    </div>
    <Section text="数字格式" className="mt-[11px]" />
    <Section text="窗口设置" className="mt-[2px]" />
  </div>
);

/* ---------- graphics ---------- */
const TabBtn = ({ text, active, w }: { text: string; active?: boolean; w: string }) => (
  <div className={`${w} pt-[2px] flex items-center justify-center text-[12px] whitespace-nowrap [word-spacing:4px] ${active ? 'bg-[#fafbff] border border-b-0 border-[#cfd6e0] text-[#2f8fe0] h-[26px] z-10' : 'h-[25px] bg-[#ebebeb] text-[#222]'}`}>{text}</div>
);

const Pressed = ({ icon }: { icon: string }) => (
  <div className="w-[18px] h-[18px] flex items-center justify-center border-2 border-[#3c6aa5] rounded-[2px] bg-[#d2e4f7] overflow-hidden"><Icon name={icon} /></div>
);

const ToolCell = ({ children, w = 'w-[24px]' }: { children: React.ReactNode; w?: string }) => (
  <div className={`${w} flex justify-center items-center shrink-0`}>{children}</div>
);

const Sep = ({ className }: { className: string }) => <div className={`w-px h-[16px] bg-[#c9ced6] shrink-0 ${className}`} />;

const BOW = 'M1105.7 312.6Q1376 528 1649.6 736';

const Scene = () => (
  <svg viewBox="972 245 945 626" className="absolute inset-0 w-[945px] h-[626px]">
    <defs>
      <linearGradient id="plateG" gradientUnits="userSpaceOnUse" x1="1500" y1="397" x2="1433" y2="484">
        <stop offset="0" stopColor="#b92c24" />
        <stop offset="0.3" stopColor="#c0501f" />
        <stop offset="0.6" stopColor="#c26c1f" />
        <stop offset="1" stopColor="#be6626" />
      </linearGradient>
      <radialGradient id="plateDark" gradientUnits="userSpaceOnUse" cx="0" cy="0" r="1" gradientTransform="translate(1478 590) rotate(38) scale(95 38)">
        <stop offset="0" stopColor="#b5312a" stopOpacity="0.95" />
        <stop offset="1" stopColor="#b5312a" stopOpacity="0" />
      </radialGradient>
      <radialGradient id="plateLight1" gradientUnits="userSpaceOnUse" cx="0" cy="0" r="1" gradientTransform="translate(1530 525) rotate(38) scale(130 40)">
        <stop offset="0" stopColor="#bd7a1c" />
        <stop offset="1" stopColor="#bd7a1c" stopOpacity="0" />
      </radialGradient>
      <radialGradient id="plateLight2" gradientUnits="userSpaceOnUse" cx="0" cy="0" r="1" gradientTransform="translate(1280 340) rotate(45) scale(140 45)">
        <stop offset="0" stopColor="#bf7a20" />
        <stop offset="1" stopColor="#bf7a20" stopOpacity="0" />
      </radialGradient>
      <radialGradient id="discG" gradientUnits="userSpaceOnUse" cx="1070" cy="340" r="175">
        <stop offset="0" stopColor="#b85e00" />
        <stop offset="0.55" stopColor="#b45400" />
        <stop offset="1" stopColor="#a82200" />
      </radialGradient>
      <linearGradient id="sideG" gradientUnits="userSpaceOnUse" x1="1205" y1="689" x2="1339.5" y2="516">
        <stop offset="0" stopColor="#e92400" />
        <stop offset="0.06" stopColor="#fb1800" />
        <stop offset="0.35" stopColor="#ff0c00" />
        <stop offset="0.7" stopColor="#e80800" />
        <stop offset="1" stopColor="#e21000" />
      </linearGradient>
      <radialGradient id="sideHot" gradientUnits="userSpaceOnUse" cx="0" cy="0" r="1" gradientTransform="translate(1240 640) rotate(38) scale(180 70)">
        <stop offset="0" stopColor="#f43200" />
        <stop offset="1" stopColor="#f43200" stopOpacity="0" />
      </radialGradient>
      <linearGradient id="sideEnd" gradientUnits="userSpaceOnUse" x1="1560" y1="790" x2="1720" y2="840">
        <stop offset="0" stopColor="#e81800" stopOpacity="0" />
        <stop offset="1" stopColor="#e63a00" />
      </linearGradient>
      <linearGradient id="stripG" gradientUnits="userSpaceOnUse" x1="1410" y1="571" x2="1420.4" y2="557.6">
        <stop offset="0" stopColor="#d93c00" />
        <stop offset="0.35" stopColor="#f57800" />
        <stop offset="0.65" stopColor="#f27000" />
        <stop offset="1" stopColor="#d84800" />
      </linearGradient>
      <linearGradient id="barG" x1="0" y1="0" x2="0" y2="1">
        <stop offset="0" stopColor="#ffffff" />
        <stop offset="0.38" stopColor="#ffff00" />
        <stop offset="0.57" stopColor="#ff9a00" />
        <stop offset="0.78" stopColor="#ff0000" />
        <stop offset="1" stopColor="#5f0000" />
      </linearGradient>
    </defs>
    <g stroke="#8c8c8c" strokeWidth="1">
      <path d="M1451 245L1919 609M1619.5 245L1919 478M1788 245.5L1919 346M1590.5 418L1870 300" />
      <path d="M972 616.3L1302 870.6M972 766.5L1108 870.6M1334.5 791L1313 870.6" />
    </g>
    <path d="M1015 245H1124L1105.7 312.6L1184.7 396C1140 440 1060 505 999 512Q985 512 972 507V311Q990 275 1015 245Z" fill="url(#discG)" />
    <path d="M972 507Q985 512 999 512C1060 505 1140 440 1184.7 396L1730 819.6L1680 870.6H1439Z" fill="url(#sideG)" />
    <path d="M972 507Q985 512 999 512C1060 505 1140 440 1184.7 396L1730 819.6L1680 870.6H1439Z" fill="url(#sideHot)" />
    <path d="M1560 687L1730 819.6L1680 870.6H1600Z" fill="url(#sideEnd)" />
    <path d={`${BOW}L1698.5 550L1309 245H1124Z`} fill="url(#plateG)" />
    <path d={`${BOW}L1698.5 550L1309 245H1124Z`} fill="url(#plateLight1)" />
    <path d={`${BOW}L1698.5 550L1309 245H1124Z`} fill="url(#plateLight2)" />
    <path d={`${BOW}L1698.5 550L1309 245H1124Z`} fill="url(#plateDark)" />
    <path d={`${BOW}L1730 819.6L1184.7 396Z`} fill="url(#stripG)" />
    <g stroke="#1a0a00" strokeWidth="1" fill="none">
      <path d={`M1124 245L1105.7 312.6`} />
      <path d={`${BOW}L1698.5 550L1309 245`} />
      <path d="M1105.7 312.6L1184.7 396L1730 819.6L1649.6 736" />
      <path d="M972 507Q985 512 999 512C1060 505 1140 440 1184.7 396" />
      <path d="M972 311Q990 275 1015 245" />
      <path d="M1730 819.6L1680 870.6" strokeOpacity="0.5" />
    </g>
    <rect x="1827" y="330" width="15" height="486.5" fill="url(#barG)" stroke="#444" strokeWidth="1" />
    <path d="M1827 573h3M1839 573h3" stroke="#444" />
    <path d="M1813 304l6-10 6 10z" fill="#000" />
    <path d="M1813 828l6 10 6-10z" fill="#000" />
    <g fontFamily="DejaVu Sans" fontSize="12" fill="#222">
      <text x="1829" y="303.5">300</text>
      <text x="1850" y="577.5">300.15</text>
      <text x="1829" y="837.5">300</text>
    </g>
    <path d="M1015 826.5L999 813" stroke={B} strokeWidth="1.5" />
    <path d="M996 810l7 1-4 5z" fill={B} />
    <path d="M1015 826.5L1000 833" stroke={M} strokeWidth="1.5" />
    <path d="M995 836l6-6 2 5z" fill="#e0336e" />
    <path d="M1015 826.5L1011 846" stroke="#4aa84a" strokeWidth="1.5" />
    <path d="M1008 843l6 1-4 7z" fill="#4aa84a" />
    <g fontFamily="Open Sans" fontSize="12" fill="#222">
      <text x="987" y="809">z</text>
      <text x="985" y="841">x</text>
      <text x="1005" y="860">y</text>
    </g>
    <g transform="translate(1893 251)">
      <path d="M0 3l14-3 3 13-14 3z" fill="#dfe2e8" />
      <rect x="3" y="3" width="12" height="10" rx="2" fill="#14539f" />
      <rect x="6" y="5" width="7" height="6" rx="1" fill="#e9d98a" />
    </g>
  </svg>
);

const Graphics = () => (
  <div className="h-[688px] shrink-0 bg-[#fafbff] border border-[#a8d0f5] flex flex-col">
    <div className="h-[31px] shrink-0 flex items-end gap-[8px] pl-[4px] border-b border-[#cfd6e0]">
      <TabBtn active text="图形" w="w-[36px]" />
      <TabBtn text="探针图 1" w="w-[59px]" />
      <TabBtn text="收敛图 1" w="w-[59px]" />
      <div className="ml-auto mb-[3px] mr-[4px] flex items-center gap-[8px]">
        <Caret />
        <svg width="8" height="11" viewBox="0 0 8 11"><path d="M1.5 0h5v6h1v1h-3v4h-1V7H.5V6h1z" fill="#333" /></svg>
      </div>
    </div>
    <div className="h-[30px] shrink-0 flex items-center pl-[1px] pt-[4px]">
      <ToolCell><Icon name="zoomIn" /></ToolCell>
      <ToolCell><Icon name="zoomOut" /></ToolCell>
      <ToolCell><Icon name="zoomBox" /></ToolCell>
      <ToolCell><Icon name="zoomFit" /></ToolCell>
      <Sep className="ml-[7px] mr-[14px]" />
      <Icon name="views" />
      <Caret className="ml-[9px] mr-[7px]" />
      <ToolCell><Icon name="xy" /></ToolCell>
      <ToolCell><Icon name="yz" /></ToolCell>
      <ToolCell><Icon name="zx" /></ToolCell>
      <ToolCell><Pressed icon="gridBtn" /></ToolCell>
      <ToolCell><Pressed icon="axesBtn" /></ToolCell>
      <ToolCell><Pressed icon="legendBtn" /></ToolCell>
      <Sep className="ml-[5px] mr-[9px]" />
      <ToolCell><Pressed icon="persp" /></ToolCell>
      <ToolCell><Icon name="layers" /></ToolCell>
      <Sep className="ml-[7px] mr-[7px]" />
      <ToolCell><Icon name="camera" /></ToolCell>
      <ToolCell><Icon name="printer" /></ToolCell>
    </div>
    <div className="relative flex-1 bg-linear-to-b from-white to-[#dbebfd] overflow-hidden">
      <Scene />
      <div className="absolute left-[377px] top-[13px] text-[12px] leading-[17px] text-[#333] whitespace-pre font-['DejaVu_Sans','Noto_Sans_CJK_SC',sans-serif] tracking-[-0.2px]">时间=0 s  表面: 温度 (K)</div>
    </div>
  </div>
);

/* ---------- probe table ---------- */
const COLS = ['w-[42px]', 'w-[120px]', 'w-[120px]', 'w-[120px]', 'w-[120px]'];
const HEAD = ['时间 (s)', '温度 (K), 边界探针 1', '温度 (K), 边界探针 2', '温度 (K), 边界探针 3', '温度 (K), 边界探针 4'];
const ROWS = [
  ['346.50', '341.60', '332.53', '313.43', '306.03'],
  ['348.00', '341.60', '332.53', '313.43', '306.03'],
  ['349.50', '341.60', '332.53', '313.43', '306.03'],
];

const ProbeTable = () => (
  <div className="h-[171px] shrink-0 bg-[#fafbff] border border-[#d3d8e3] flex flex-col">
    <div className="h-[31px] shrink-0 flex items-end gap-[8px] pl-[4px] border-b border-[#d3d8e3]">
      <TabBtn text="消息" w="w-[34px]" />
      <TabBtn text="进度" w="w-[34px]" />
      <TabBtn text="日志" w="w-[34px]" />
      <div className="w-[61px] h-[26px] pt-[2px] bg-[#fafbff] border border-b-0 border-[#d3d8e3] z-10 flex items-center justify-center text-[12px] text-[#4075b8] whitespace-nowrap [word-spacing:4px]">探针表 1</div>
      <div className="ml-auto mb-[3px] mr-[3px]"><PanelPins x /></div>
    </div>
    <div className="h-[33px] shrink-0 flex items-center pl-[10px]">
      <Icon name="bars" />
      <Sep className="ml-[10px] mr-[9px]" />
      <ToolCell><Icon name="num1" /></ToolCell>
      <ToolCell><div className="w-[17px] h-[20px] bg-[#4d82bc] border border-[#2f5f96] text-white text-[7px] font-bold leading-[18px] text-center">AUTO</div></ToolCell>
      <ToolCell><Icon name="num2" /></ToolCell>
      <ToolCell><Icon name="num3" /></ToolCell>
      <ToolCell><Icon name="num4" /></ToolCell>
      <Sep className="ml-[6px] mr-[9px]" />
      <ToolCell><Icon name="broom" /></ToolCell>
      <ToolCell><Icon name="trash" /></ToolCell>
      <ToolCell><Icon name="tableAxis" /></ToolCell>
      <ToolCell><Icon name="square" /></ToolCell>
      <ToolCell><Icon name="copyT" /></ToolCell>
      <ToolCell><Icon name="expT" /></ToolCell>
      <ToolCell><Icon name="grid" /></ToolCell>
      <Caret className="ml-[5px]" />
    </div>
    <div className="ml-[9px] mr-[9px] h-[99px] bg-white border border-[#c8ccd4] text-[12px] text-[#222] flex flex-col overflow-hidden">
      <div className="h-[28px] shrink-0 flex bg-linear-to-b from-white to-[#eeeeee] mr-[18px] border-b-2 border-[#c0c0c0]">
        {HEAD.map((h, i) => (
          <div key={i} className={`${COLS[i]} shrink-0 border-r border-[#e3e3e3] flex items-center pt-[8px] whitespace-nowrap ${i === 0 ? 'pl-[1px]' : 'pl-[5px]'}`}>{h}</div>
        ))}
      </div>
      <div className="flex flex-1">
        <div className="flex-1">
          {ROWS.map((r, ri) => (
            <div key={ri} className="h-[20px] flex border-b-2 border-[#b0b0b0]">
              {r.map((c, ci) => (
                <div key={ci} className={`${COLS[ci]} shrink-0 border-r border-[#a8a8a8] flex items-center pl-[1px] pt-[2px]`}>{c}</div>
              ))}
            </div>
          ))}
        </div>
        <div className="w-[18px] bg-[#f0f0f0] flex flex-col items-center shrink-0">
          <svg width="10" height="6" viewBox="0 0 10 6" className="mt-[8px]"><path d="M1 5l4-4 4 4" stroke="#aaa" fill="none" strokeWidth="1.5" /></svg>
          <div className="w-full h-[8px] bg-[#c8c8c8] mt-[31px]" />
          <svg width="10" height="6" viewBox="0 0 10 6" className="mt-[6px]"><path d="M1 1l4 4 4-4" stroke="#aaa" fill="none" strokeWidth="1.5" /></svg>
        </div>
      </div>
    </div>
  </div>
);

export default function App() {
  return (
    <div className="w-[1920px] h-[1082px] bg-[#f9fafd] flex flex-col overflow-hidden font-['Open_Sans','Noto_Sans_CJK_SC',sans-serif]">
      <TitleBar />
      <TabStrip />
      <Ribbon />
      <div className="mt-[5px] ml-[3px] h-[865px] flex gap-[6px] shrink-0">
        <ModelBuilder />
        <Settings />
        <div className="w-[947px] flex flex-col gap-[6px] shrink-0">
          <Graphics />
          <ProbeTable />
        </div>
      </div>
      <div className="mt-[5px] flex-1 bg-[#f0eded] flex items-center pl-[1208px] pt-[1px] text-[12px] text-[#222]">
        1.27 GB | 1.49 GB
        <span className="ml-[321px] w-px h-px bg-[#999]" />
      </div>
    </div>
  );
}
